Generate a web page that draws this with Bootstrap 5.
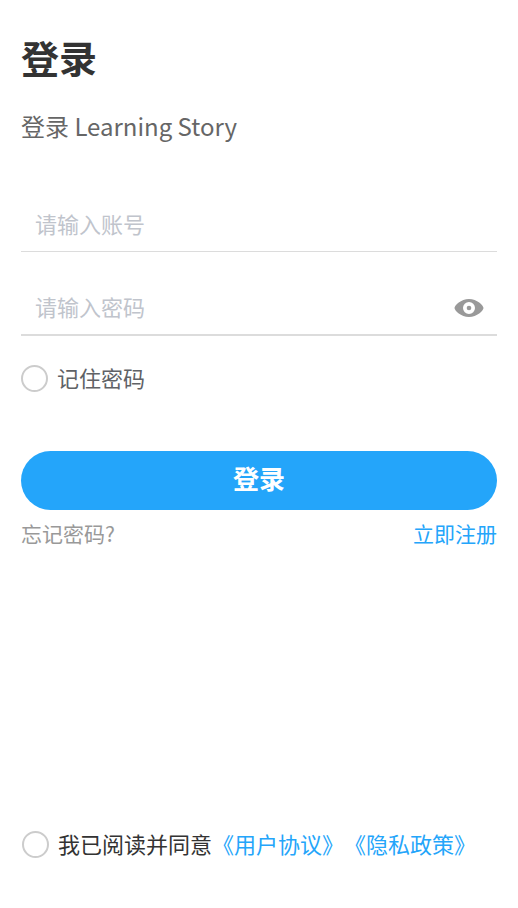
<!DOCTYPE html>
<html lang="zh-CN">
<head>
<meta charset="utf-8">
<meta name="viewport" content="width=device-width, initial-scale=1">
<title>登录</title>
<link href="https://cdn.jsdelivr.net/npm/bootstrap@5.3.0/dist/css/bootstrap.min.css" rel="stylesheet">
<style>
body{font-family:"Noto Sans CJK SC",sans-serif;color:#303133;background:#fff}
.login-page{padding:29px 21px 46px}
.login-title{font-size:38px;line-height:56px;font-weight:700;margin-bottom:23px;color:#333}
.login-sub{font-size:24px;line-height:36px;color:#666;margin-bottom:52px}
.field-row{border-bottom:1px solid #dcdcdc;height:56px;margin-bottom:28px}
.field-row.field-last{border-bottom-width:2px;margin-bottom:25px}
.field-row .form-control{font-size:22px;line-height:32px;padding:10px 14px 12px;color:#303133;box-shadow:none}
.field-row .form-control::placeholder{color:#c0c4cc;opacity:1}
.eye-btn{padding:2px 12px 0;line-height:1}
.check-row{gap:9px}
.form-check-input.round-check{width:27px;height:27px;border:2px solid #ccc;margin:0;border-radius:50%;flex:none}
.check-text{font-size:22px;line-height:32px;padding-bottom:3px;color:#606266;text-spacing-trim:space-all}
.btn-login{--bs-btn-color:#fff;--bs-btn-bg:#24a5fa;--bs-btn-hover-color:#fff;--bs-btn-hover-bg:#1597e8;font-size:26px;line-height:39px;font-weight:700;padding:7px 0 13px;border:0;margin-top:55px}
.link-row{font-size:21px;line-height:30px;margin-top:8px}
.link-muted{color:#999}
.link-main{color:#24a5fa}
.agree-text{color:#333}
.agree-row{padding-left:1px}
</style>
<script src="https://cdn.jsdelivr.net/npm/bootstrap@5.3.0/dist/js/bootstrap.bundle.min.js"></script>
</head>
<body>
<main class="login-page d-flex flex-column min-vh-100">
<h1 class="login-title">登录</h1>
<p class="login-sub">登录 Learning Story</p>
<form class="d-flex flex-column flex-grow-1">
<div class="field-row d-flex align-items-center"><input class="form-control border-0 bg-transparent" type="text" aria-label="账号" placeholder="请输入账号"></div>
<div class="field-row field-last d-flex align-items-center"><input class="form-control border-0 bg-transparent" type="password" aria-label="密码" placeholder="请输入密码"><button type="button" class="btn border-0 eye-btn" aria-label="显示密码"><svg width="32" height="20" viewBox="0 0 32 20"><path fill="#999" fill-rule="evenodd" d="M1.500 10C1.500 7.500 8 1 16 1s14.500 6.500 14.500 9S24 19 16 19 1.500 12.500 1.500 10zM16 4a6 6 0 100 12 6 6 0 000-12z"/><circle cx="16" cy="10" r="2.300" fill="#999"/></svg></button></div>
<div class="check-row d-flex align-items-center"><input class="form-check-input round-check" type="checkbox" id="remember"><label class="check-text" for="remember">记住密码</label></div>
<button type="submit" class="btn btn-login rounded-pill w-100">登录</button>
<div class="link-row d-flex justify-content-between"><a href="#" class="link-muted text-decoration-none">忘记密码?</a><a href="#" class="link-main text-decoration-none">立即注册</a></div>
<div class="check-row agree-row d-flex align-items-center mt-auto"><input class="form-check-input round-check" type="checkbox" id="agree"><div class="check-text"><label class="agree-text" for="agree">我已阅读并同意</label><a href="#" class="link-main text-decoration-none">《用户协议》</a><a href="#" class="link-main text-decoration-none">《隐私政策》</a></div></div>
</form>
</main>
</body>
</html>
